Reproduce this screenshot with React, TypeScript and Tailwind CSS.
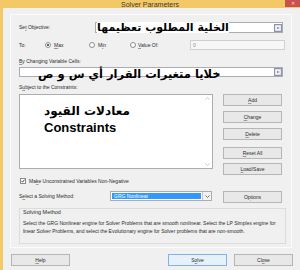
import React from "react";

const RangeIcon = () => (
    <svg width="8" height="8" viewBox="0 0 8 8" className="shrink-0">
        <rect x="0.5" y="0.5" width="7" height="7" fill="#d3dde9" stroke="#8696ab" />
        <rect x="1.5" y="2" width="5" height="4" fill="#f4f7fb" />
        <path d="M3 3.2 L6 4 L3 4.8 Z" fill="#d8261f" />
    </svg>
);

const Radio = ({ checked }: { checked?: boolean }) => (
    <div className="w-[6px] h-[6px] rounded-full border border-[#8c8c8c] bg-white flex items-center justify-center shrink-0">
        {checked && <div className="w-[2px] h-[2px] rounded-full bg-[#2b2b2b]" />}
    </div>
);

const Btn = ({
    children,
    className = "",
    primary,
}: {
    children: React.ReactNode;
    className?: string;
    primary?: boolean;
}) => (
    <button
        className={
            "w-[59px] h-[12px] flex items-center justify-center border text-[5px] leading-none text-[#2b2b2b] " +
            (primary ? "border-[#7eb4ea] bg-[#e5f1fb] " : "border-[#b6b6b6] bg-[#e8e8e8] ") +
            className
        }
    >
        {children}
    </button>
);

export default function App() {
    return (
        <div className="w-[300px] h-[270px] overflow-hidden bg-[#f3c968] flex flex-col font-['Liberation_Sans',Arial,sans-serif] text-[#2b2b2b]">
            {/* title bar */}
            <div className="h-[8px] shrink-0 relative flex items-center justify-center">
                <span className="text-[7px] leading-none text-[#3a3a3a]">Solver Parameters</span>
                <div className="absolute right-0 top-0 w-[15px] h-[7px] bg-[#c9504f] flex items-center justify-center text-[#f6d6d6] text-[5px] leading-none">
                    ✕
                </div>
            </div>

            <div className="flex-1 ml-[3px] bg-[#f0f0f0] pt-[6px] pl-[7px] flex flex-col">
                <div className="w-[282px] h-[234px] border border-[#fbfbfb] pl-[8px] flex flex-col text-[5px] leading-none">
                    {/* objective */}
                    <div className="mt-[7px] h-[11px] flex items-center">
                        <span className="w-[76px]">
                            Se<span className="underline decoration-[#9a9a9a]">t</span> Objective:
                        </span>
                        <div className="w-[188px] h-[11px] bg-white border border-[#abadb3] flex items-center">
                            <span
                                dir="rtl"
                                className="ml-[1px] bg-white text-black font-bold text-[11px] leading-none font-['DejaVu_Sans',sans-serif]"
                            >
                                الخلية المطلوب تعظيمها
                            </span>
                            <div className="ml-auto">
                                <RangeIcon />
                            </div>
                        </div>
                    </div>

                    {/* to */}
                    <div className="mt-[7px] h-[10px] flex items-center">
                        <span className="w-[26px]">To:</span>
                        <div className="w-[44px] flex items-center">
                            <Radio checked />
                            <span className="ml-[3px]">
                                <span className="underline decoration-[#9a9a9a]">M</span>ax
                            </span>
                        </div>
                        <div className="w-[41px] flex items-center">
                            <Radio />
                            <span className="ml-[3px]">
                                M<span className="underline decoration-[#9a9a9a]">i</span>n
                            </span>
                        </div>
                        <div className="w-[60px] flex items-center">
                            <Radio />
                            <span className="ml-[2px]">
                                <span className="underline decoration-[#9a9a9a]">V</span>alue Of:
                            </span>
                        </div>
                        <div className="w-[95px] h-[10px] bg-[#f7f7f7] border border-[#d0d0d0] flex items-center pl-[2px] text-[#8a8a8a]">
                            0
                        </div>
                    </div>

                    {/* changing cells */}
                    <div className="mt-[8px] h-[6px] flex items-center">
                        <span className="underline decoration-[#9a9a9a]">B</span>y Changing Variable Cells:
                    </div>
                    <div className="mt-[3px] w-[264px] h-[10px] bg-white border border-[#abadb3] flex items-center">
                        <span
                            dir="rtl"
                            className="ml-[18px] mt-[5px] text-black font-bold text-[11.5px] leading-none font-['DejaVu_Sans',sans-serif]"
                        >
                            خلايا متغيرات القرار أي س و ص
                        </span>
                        <div className="ml-auto">
                            <RangeIcon />
                        </div>
                    </div>

                    {/* constraints */}
                    <div className="mt-[7px] h-[6px] flex items-center">
                        S<span className="underline decoration-[#9a9a9a]">u</span>bject to the Constraints:
                    </div>
                    <div className="mt-[4px] flex items-start">
                        <div className="w-[194px] h-[75px] bg-white border border-[#abadb3] flex">
                            <div className="flex-1 flex flex-col items-start pl-[24px] pt-[10px] text-black font-bold">
                                <span dir="rtl" className="text-[12px] leading-[13px] font-['DejaVu_Sans',sans-serif]">
                                    معادلات القيود
                                </span>
                                <span className="mt-[3px] text-[13px] leading-[13px] font-['Liberation_Sans',Arial,sans-serif]">
                                    Constraints
                                </span>
                            </div>
                            <div className="w-[10px] flex flex-col items-center justify-between py-[2px]">
                                <svg width="5" height="3" viewBox="0 0 5 3">
                                    <path d="M0.5 2.5 L2.5 0.5 L4.5 2.5" fill="none" stroke="#b8b8b8" strokeWidth="0.8" />
                                </svg>
                                <svg width="5" height="3" viewBox="0 0 5 3">
                                    <path d="M0.5 0.5 L2.5 2.5 L4.5 0.5" fill="none" stroke="#b8b8b8" strokeWidth="0.8" />
                                </svg>
                            </div>
                        </div>
                        <div className="ml-[10px] flex flex-col">
                            <Btn>
                                <span className="underline decoration-[#9a9a9a]">A</span>dd
                            </Btn>
                            <Btn className="mt-[5px]">
                                <span className="underline decoration-[#9a9a9a]">C</span>hange
                            </Btn>
                            <Btn className="mt-[5px]">
                                <span className="underline decoration-[#9a9a9a]">D</span>elete
                            </Btn>
                            <Btn className="mt-[7px]">
                                <span className="underline decoration-[#9a9a9a]">R</span>eset All
                            </Btn>
                            <Btn className="mt-[4px]">
                                <span className="underline decoration-[#9a9a9a]">L</span>oad/Save
                            </Btn>
                        </div>
                    </div>

                    {/* checkbox */}
                    <div className="mt-[3px] h-[6px] flex items-center">
                        <div className="ml-[1px] w-[6px] h-[6px] border border-[#8c8c8c] bg-white flex items-center justify-center">
                            <svg width="4" height="4" viewBox="0 0 4 4">
                                <path d="M0.5 2 L1.6 3.2 L3.6 0.6" fill="none" stroke="#2b2b2b" strokeWidth="0.8" />
                            </svg>
                        </div>
                        <span className="ml-[3px]">
                            Ma<span className="underline decoration-[#9a9a9a]">k</span>e Unconstrained Variables Non-Negative
                        </span>
                    </div>

                    {/* solving method select */}
                    <div className="mt-[7px] h-[12px] flex items-start">
                        <span className="w-[91px] h-[10px] flex items-center">
                            S<span className="underline decoration-[#9a9a9a]">e</span>lect a Solving Method:
                        </span>
                        <div className="w-[102px] h-[10px] bg-white border border-[#abadb3] flex">
                            <div className="flex-1 m-[1px] bg-[#3399ff] text-white flex items-center pl-[2px]">
                                GRG Nonlinear
                            </div>
                            <div className="w-[9px] border-l border-[#c8c8c8] bg-[#f2f2f2] flex items-center justify-center">
                                <svg width="5" height="3" viewBox="0 0 5 3">
                                    <path d="M0.5 0.5 L2.5 2.5 L4.5 0.5" fill="none" stroke="#555" strokeWidth="0.8" />
                                </svg>
                            </div>
                        </div>
                        <Btn className="ml-[11px]">
                            O<span className="underline decoration-[#9a9a9a]">p</span>tions
                        </Btn>
                    </div>

                    {/* solving method group */}
                    <div className="mt-[5px] w-[267px] h-[36px] border border-[#dcdcdc] px-[3px] pt-[1px]">
                        <div className="h-[6px] flex items-center text-[5.5px]">Solving Method</div>
                        <p className="mt-[3px] leading-[8px] text-[5px]">
                            Select the GRG Nonlinear engine for Solver Problems that are smooth nonlinear. Select the LP Simplex engine
                            for linear Solver Problems, and select the Evolutionary engine for Solver problems that are non-smooth.
                        </p>
                    </div>
                </div>

                {/* bottom buttons */}
                <div className="mt-[6px] ml-[1px] flex">
                    <Btn>
                        <span className="underline decoration-[#9a9a9a]">H</span>elp
                    </Btn>
                    <Btn primary className="ml-[98px]">
                        S<span className="underline decoration-[#9a9a9a]">o</span>lve
                    </Btn>
                    <Btn className="ml-[7px]">
                        Cl<span className="underline decoration-[#9a9a9a]">o</span>se
                    </Btn>
                </div>
            </div>
        </div>
    );
}
